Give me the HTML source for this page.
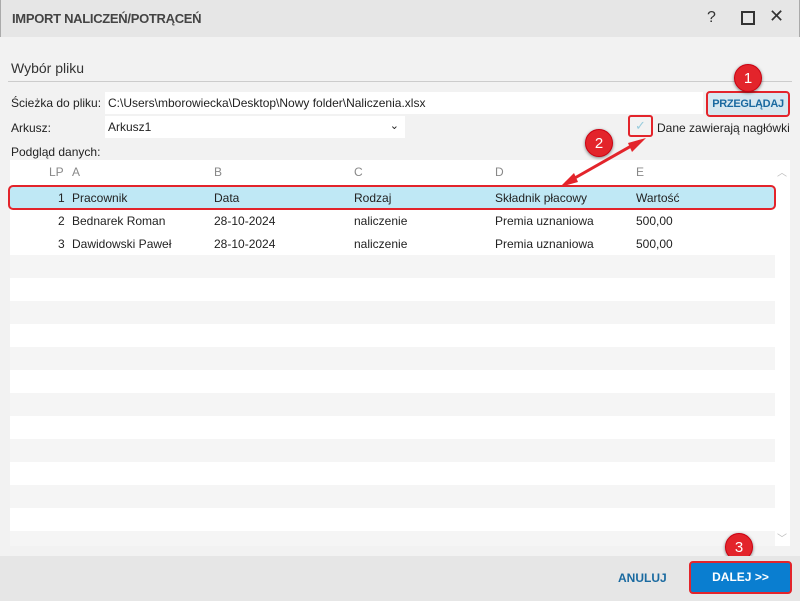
<!DOCTYPE html>
<html><head><meta charset="utf-8"><style>
*{margin:0;padding:0;box-sizing:border-box}
body{width:800px;height:601px;overflow:hidden;font-family:"Liberation Sans",sans-serif;font-size:12px;color:#222;background:#f2f2f2;position:relative}
.abs{position:absolute}
.title{left:0;top:0;width:800px;height:37px;background:#e6e6e6;border-left:1px solid #aaa;border-right:1px solid #aaa}
.title span{position:absolute;left:11px;top:11px;font-weight:bold;font-size:13px;color:#444;letter-spacing:-0.3px}
.row{position:absolute;left:11px;width:764px;height:23px;font-size:12px}
.row span{position:absolute;top:5px}
.badge{position:absolute;width:28px;height:28px;border-radius:50%;background:#e3242b;color:#fff;font-size:15px;text-align:center;line-height:28px;box-shadow:0 1px 3px rgba(0,0,0,.5);border:1px solid #c01}
</style></head><body>
<div class="abs title"><span>IMPORT NALICZEŃ/POTRĄCEŃ</span>
<div class="abs" style="left:706px;top:9px;font-size:16px;color:#333">?</div>
<div class="abs" style="left:740px;top:11px;width:14px;height:14px;border:2px solid #333"></div>
<div class="abs" style="left:768px;top:6px;font-size:18px;color:#333">✕</div>
</div>
<div class="abs" style="left:11px;top:60px;font-size:14px;color:#333">Wybór pliku</div>
<div class="abs" style="left:8px;top:81px;width:784px;height:1px;background:#ccc"></div>
<div class="abs" style="left:11px;top:96px">Ścieżka do pliku:</div>
<div class="abs" style="left:105px;top:92px;width:598px;height:22px;background:#fff;padding:4px 3px">C:\Users\mborowiecka\Desktop\Nowy folder\Naliczenia.xlsx</div>
<div class="abs" style="left:706px;top:91px;width:84px;height:26px;background:#d7e8f0;border:2px solid #e3242b;border-radius:4px;color:#1a6aa0;font-weight:bold;font-size:11px;letter-spacing:-0.3px;text-align:center;line-height:22px">PRZEGLĄDAJ</div>
<div class="abs" style="left:11px;top:121px">Arkusz:</div>
<div class="abs" style="left:105px;top:116px;width:300px;height:22px;background:#fff;padding:4px 3px">Arkusz1<span style="position:absolute;right:6px;top:3px;font-size:11px">⌄</span></div>
<div class="abs" style="left:628px;top:115px;width:25px;height:22px;border:2px solid #e3242b;border-radius:3px;color:#9cd;font-size:13px;text-align:center;line-height:18px">✓</div>
<div class="abs" style="left:657px;top:121px">Dane zawierają nagłówki</div>
<div class="abs" style="left:11px;top:145px">Podgląd danych:</div>
<div class="abs" style="left:10px;top:160px;width:780px;height:386px;background:#fff"></div>
<div class="abs" style="left:10px;top:160px;width:765px;height:386px;background:repeating-linear-gradient(#f5f5f5 0 23px,#fff 23px 46px);background-position:0 3px"></div>
<div class="abs" style="left:10px;top:160px;width:765px;height:95px;background:#fff"></div>
<div class="row" style="top:160px;color:#888"><span style="left:38px">LP</span><span style="left:61px">A</span><span style="left:203px">B</span><span style="left:343px">C</span><span style="left:484px">D</span><span style="left:625px">E</span></div>
<div class="abs" style="left:777px;top:164px;color:#bbb;font-size:10px">︿</div>
<div class="abs" style="left:777px;top:530px;color:#bbb;font-size:10px">﹀</div>
<div class="abs" style="left:8px;top:185px;width:768px;height:25px;background:#bfe8f5;border:2px solid #e3242b;border-radius:5px"></div>
<div class="row" style="top:186px"><span style="left:47px">1</span><span style="left:61px">Pracownik</span><span style="left:203px">Data</span><span style="left:343px">Rodzaj</span><span style="left:484px">Składnik płacowy</span><span style="left:625px">Wartość</span></div>
<div class="row" style="top:209px"><span style="left:47px">2</span><span style="left:61px">Bednarek Roman</span><span style="left:203px">28-10-2024</span><span style="left:343px">naliczenie</span><span style="left:484px">Premia uznaniowa</span><span style="left:625px">500,00</span></div>
<div class="row" style="top:232px"><span style="left:47px">3</span><span style="left:61px">Dawidowski Paweł</span><span style="left:203px">28-10-2024</span><span style="left:343px">naliczenie</span><span style="left:484px">Premia uznaniowa</span><span style="left:625px">500,00</span></div>
<svg class="abs" style="left:560px;top:135px" width="90" height="55"><line x1="6" y1="48" x2="80" y2="6" stroke="#e3242b" stroke-width="3"/><polygon points="0,52 14,38 18,47" fill="#e3242b"/><polygon points="86,3 72,17 68,8" fill="#e3242b"/></svg>
<div class="badge" style="left:734px;top:64px">1</div>
<div class="badge" style="left:585px;top:129px">2</div>
<div class="badge" style="left:725px;top:533px">3</div>
<div class="abs" style="left:0;top:556px;width:800px;height:45px;background:#e6e6e6"></div>
<div class="abs" style="left:618px;top:571px;color:#1a6aa0;font-weight:bold">ANULUJ</div>
<div class="abs" style="left:689px;top:561px;width:103px;height:33px;background:#0a7ed0;border:2px solid #e3242b;border-radius:4px;color:#fff;font-weight:bold;text-align:center;line-height:29px">DALEJ &gt;&gt;</div>
</body></html>
